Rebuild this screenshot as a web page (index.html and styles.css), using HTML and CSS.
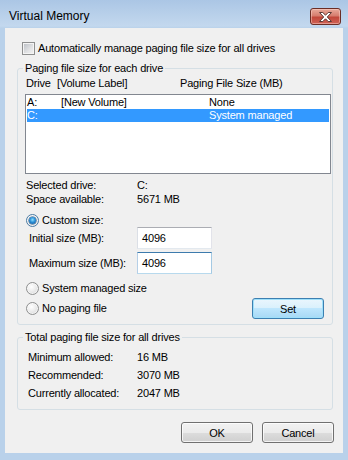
FILE: index.html
```html
<!DOCTYPE html>
<html>
<head>
<meta charset="utf-8">
<title>Virtual Memory</title>
<link rel="stylesheet" href="styles.css">
</head>
<body>
<div class="window">
  <div class="titlebar">
    <span class="title">Virtual Memory</span>
    <button class="close" aria-label="Close">
      <svg width="13" height="10" viewBox="0 0 13 10"><polygon points="0.5,0.5 3.8,0.5 6.5,3.2 9.2,0.5 12.5,0.5 8.3,5 12.5,9.5 9.2,9.5 6.5,6.8 3.8,9.5 0.5,9.5 4.7,5" fill="#fff" stroke="#5a3a36" stroke-width="1" stroke-linejoin="round"/></svg>
    </button>
  </div>
  <div class="client">
    <div class="check-row"><span class="checkbox"></span><span>Automatically manage paging file size for all drives</span></div>

    <fieldset class="group drives">
      <legend>Paging file size for each drive</legend>
      <div class="list-head"><span class="h1">Drive</span><span class="h2">[Volume Label]</span><span>Paging File Size (MB)</span></div>
      <div class="list">
        <div class="list-row"><span class="c1">A:</span><span class="c2">[New Volume]</span><span>None</span></div>
        <div class="list-row selected"><span class="c1">C:</span><span class="c2"></span><span>System managed</span></div>
      </div>
      <div class="info">
        <div class="info-row"><span class="k">Selected drive:</span><span>C:</span></div>
        <div class="info-row"><span class="k">Space available:</span><span>5671 MB</span></div>
      </div>
      <div class="radio-row custom"><span class="radio on"></span><span>Custom size:</span></div>
      <div class="field-row first"><span class="fk">Initial size (MB):</span><div class="textbox">4096</div></div>
      <div class="field-row"><span class="fk">Maximum size (MB):</span><div class="textbox focus">4096</div></div>
      <div class="radio-row sys"><span class="radio"></span><span>System managed size</span></div>
      <div class="set-row">
        <div class="radio-row"><span class="radio"></span><span>No paging file</span></div>
        <button class="btn default">Set</button>
      </div>
    </fieldset>

    <fieldset class="group totals">
      <legend>Total paging file size for all drives</legend>
      <div class="tot-row"><span class="tk">Minimum allowed:</span><span>16 MB</span></div>
      <div class="tot-row"><span class="tk">Recommended:</span><span>3070 MB</span></div>
      <div class="tot-row"><span class="tk">Currently allocated:</span><span>2047 MB</span></div>
    </fieldset>

    <div class="actions">
      <button class="btn">OK</button>
      <button class="btn">Cancel</button>
    </div>
  </div>
</div>
</body>
</html>
```
FILE: styles.css
```css
* { box-sizing: border-box; }
html, body { margin: 0; padding: 0; }
body {
  width: 348px;
  height: 460px;
  overflow: hidden;
  font-family: "Liberation Sans", Arial, sans-serif;
  font-size: 11px;
  letter-spacing: -0.18px;
  color: #000;
}
.window {
  width: 348px;
  height: 460px;
  padding: 0 5px 7px;
  display: flex;
  flex-direction: column;
  background: linear-gradient(to bottom, #abc6e5 0px, #c3d8ee 26px, #b9d1ea 28px, #b9d1ea 100%);
}
.titlebar {
  height: 28px;
  display: flex;
  align-items: flex-start;
  flex: none;
}
.title {
  margin: 9px 0 0 4px;
  font-size: 12px;
  line-height: 15px;
  letter-spacing: 0;
}
.close {
  margin: 8px 2px 0 auto;
  width: 31px;
  height: 17px;
  padding: 0;
  border: 1px solid #6b2d25;
  border-radius: 3px;
  background: linear-gradient(to bottom, #e9a99b 0%, #d67d6e 45%, #c2473a 55%, #cf6357 100%);
  box-shadow: inset 0 0 0 1px rgba(255, 220, 210, 0.45);
  display: flex;
  align-items: center;
  justify-content: center;
}
.close svg { display: block; }

.client {
  flex: 1;
  background: #f0f0f0;
  padding: 13px 10px 0 12px;
  display: flex;
  flex-direction: column;
}
.check-row {
  display: flex;
  align-items: center;
  height: 15px;
  line-height: 15px;
  margin-left: 5px;
  gap: 3px;
}
.checkbox {
  width: 13px;
  height: 13px;
  flex: none;
  border: 1px solid #8e8f8f;
  background: linear-gradient(135deg, #b9bdc3 0%, #e2e3e5 60%, #f4f4f4 100%);
  box-shadow: inset 0 0 0 1px #f4f4f4;
}

.group {
  margin: 5px 0 0;
  border: 1px solid #d5dfe5;
  border-radius: 3px;
  min-width: 0;
}
.group legend {
  padding: 0 2px;
  margin-left: -2px;
  line-height: 15px;
  height: 15px;
}
.drives { padding: 0 8px 5px 7px; }
.list-head {
  display: flex;
  height: 15px;
  line-height: 15px;
  margin-left: 1px;
}
.h1 { width: 31px; }
.h2 { width: 123px; }
.list {
  margin: 3px -7px 0 0;
  height: 80px;
  border: 1px solid #828790;
  background: #fff;
  padding: 1px;
}
.list-row {
  display: flex;
  height: 13px;
  line-height: 13px;
}
.list-row.selected { background: #3399ff; color: #fff; }
.c1 { width: 34px; }
.c2 { width: 148px; }

.info { margin-top: 4px; margin-left: 1px; }
.info-row { display: flex; height: 14px; line-height: 14px; }
.k { width: 111px; }

.radio-row {
  display: flex;
  align-items: center;
  height: 13px;
  line-height: 13px;
  gap: 3px;
  margin-left: 1px;
}
.radio-row.custom { margin-top: 8px; }
.radio-row.sys { margin-top: 8px; }
.radio {
  width: 13px;
  height: 13px;
  flex: none;
  border-radius: 50%;
  border: 1px solid #8e8f8f;
  background: radial-gradient(circle at 40% 35%, #ffffff 0%, #ececec 45%, #cfd0d1 100%);
  box-shadow: inset 0 0 0 1px rgba(255,255,255,0.6);
  display: flex;
  align-items: center;
  justify-content: center;
}
.radio.on { border-color: #4a7aa3; }
.radio.on::after {
  content: "";
  width: 7px;
  height: 7px;
  border-radius: 50%;
  background: radial-gradient(circle at 50% 40%, #8fe0ff 0%, #2a8fd6 45%, #0d4f93 100%);
  box-shadow: 0 0 0 0.5px #21507e;
}

.field-row {
  display: flex;
  align-items: center;
  height: 22px;
  margin-left: 4px;
  margin-top: 3px;
}
.field-row.first { margin-top: 0; }
.fk { width: 108px; }
.textbox {
  width: 75px;
  height: 22px;
  background: #fff;
  border: 1px solid;
  border-color: #abadb3 #e2e3ea #e3e9ef #dbdfe6;
  padding: 0 4px;
  display: flex;
  align-items: center;
}
.textbox.focus { border-color: #3d7bad #a4c9e3 #b7d9ed #b5cfe7; }

.set-row {
  display: flex;
  align-items: center;
  justify-content: space-between;
  height: 21px;
  margin-top: 3px;
}

.btn {
  width: 72px;
  height: 21px;
  padding: 0;
  border: 1px solid #707070;
  border-radius: 3px;
  background: linear-gradient(to bottom, #f2f2f2 0%, #ebebeb 50%, #dddddd 50%, #cfcfcf 100%);
  box-shadow: inset 0 0 0 1px rgba(255,255,255,0.75);
  font: inherit;
  letter-spacing: inherit;
  color: #000;
  display: flex;
  align-items: center;
  justify-content: center;
}
.btn.default {
  border-color: #3c7fb1;
  background: linear-gradient(to bottom, #eaf6fd 0%, #d9f0fc 50%, #bee6fd 50%, #a7d9f5 100%);
  box-shadow: inset 0 0 0 1px #9fe0fa;
}

.totals { padding: 3px 8px 7px 7px; }
.tot-row { display: flex; height: 18px; line-height: 18px; margin-left: 3px; }
.tk { width: 109px; }

.actions {
  display: flex;
  justify-content: flex-end;
  gap: 9px;
  margin: 12px -1px 0 0;
}
```
